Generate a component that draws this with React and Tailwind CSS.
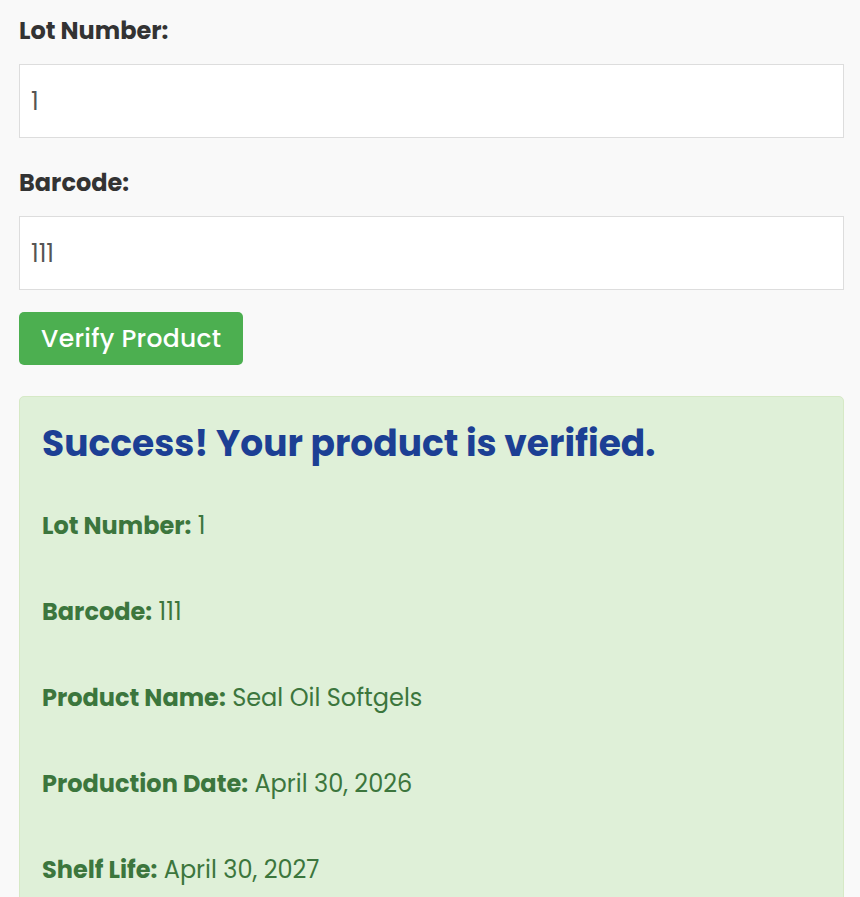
const FONT = "font-['Poppins','Inter','Noto_Sans',sans-serif]";

const Field = ({ label, value, first }) => (
  <div className={first ? '' : 'mt-[27px]'}>
    <label className="block text-[24px] leading-[36px] font-bold text-[#333] mb-[15px]">{label}</label>
    <input
      readOnly
      value={value}
      className="block w-full h-[74px] bg-white border border-[#dddddd] px-[11px] text-[24px] text-[#555] outline-none"
    />
  </div>
);

const Row = ({ label, value }) => (
  <p className="text-[24px] leading-[36px] text-[#3c763d]">
    <strong className="font-bold">{label}</strong> {value}
  </p>
);

export default function App() {
  return (
    <div className={`${FONT} min-h-screen bg-[#f9f9f9] pl-[19px] pr-[16px] pt-[13px] pb-10`}>
      <Field first label="Lot Number:" value="1" />
      <Field label="Barcode:" value="111" />
      <button className="mt-[22px] h-[53px] px-[22px] rounded-[5px] bg-[#4caf50] text-white text-[25px] tracking-[0.3px] font-medium">
        Verify Product
      </button>
      <div className="mt-[31px] bg-[#dff0d8] border border-[#d6e9c6] rounded-[5px] px-[22px] pt-[23px] pb-[30px]">
        <h2 className="text-[36px] leading-[48px] font-bold text-[#1c3f94]">
          Success! Your product is verified.
        </h2>
        <div className="mt-[40px] flex flex-col gap-[50px]">
          <Row label="Lot Number:" value="1" />
          <Row label="Barcode:" value="111" />
          <Row label="Product Name:" value="Seal Oil Softgels" />
          <Row label="Production Date:" value="April 30, 2026" />
          <Row label="Shelf Life:" value="April 30, 2027" />
        </div>
      </div>
    </div>
  );
}
